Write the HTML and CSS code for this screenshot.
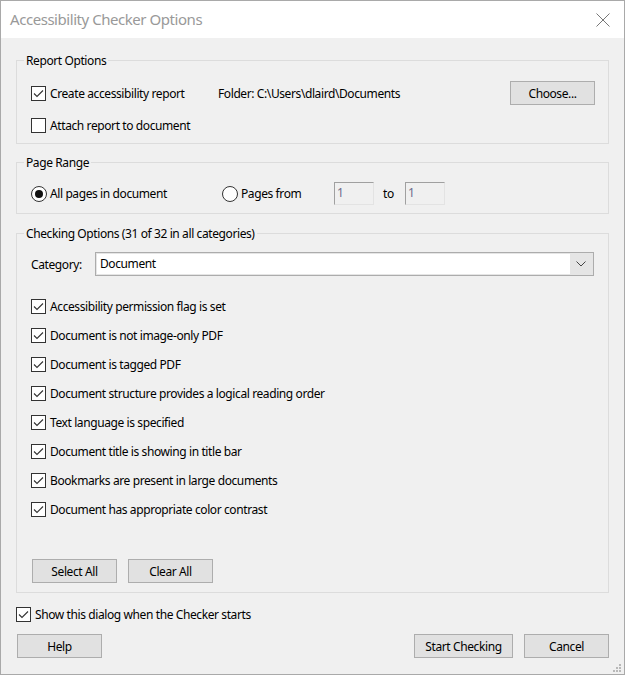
FILE: index.html
```html
<!DOCTYPE html>
<html>
<head>
<meta charset="utf-8">
<link rel="stylesheet" href="styles.css">
</head>
<body>
<div class="window">
  <div class="titlebar">
    <span class="title">Accessibility Checker Options</span>
    <svg class="close" width="14" height="14" viewBox="0 0 14 14"><path d="M0.5 0.5 L13.5 13.5 M13.5 0.5 L0.5 13.5" stroke="#777" stroke-width="1" fill="none"/></svg>
  </div>
  <div class="content">
    <div class="group g-report">
      <span class="legend">Report Options</span>
      <div class="row r1">
        <label class="chk c-create"><span class="box checked"><svg width="13" height="13" viewBox="0 0 13 13"><path d="M2 6.5 L5 9.5 L11 3.5" stroke="#333" stroke-width="1.1" fill="none"/></svg></span><span>Create accessibility report</span></label>
        <span class="folder">Folder: C:\Users\dlaird\Documents</span>
        <span class="btn choose">Choose...</span>
      </div>
      <div class="row r2">
        <label class="chk"><span class="box"></span><span>Attach report to document</span></label>
      </div>
    </div>

    <div class="group g-range">
      <span class="legend">Page Range</span>
      <div class="row rr">
        <label class="radio r-all"><span class="circle on"><span class="dot"></span></span><span>All pages in document</span></label>
        <label class="radio r-from"><span class="circle"></span><span>Pages from</span></label>
        <span class="field">1</span>
        <span class="to">to</span>
        <span class="field">1</span>
      </div>
    </div>

    <div class="group g-check">
      <span class="legend">Checking Options (31 of 32 in all categories)</span>
      <div class="row cat">
        <span class="catlabel">Category:</span>
        <div class="combo">
          <span class="combo-text">Document</span>
          <span class="combo-btn"><svg width="10" height="6" viewBox="0 0 10 6"><path d="M0.5 0.5 L5 5 L9.5 0.5" stroke="#444" stroke-width="1" fill="none"/></svg></span>
        </div>
      </div>
      <div class="list">
        <label class="chk item"><span class="box checked"><svg width="13" height="13" viewBox="0 0 13 13"><path d="M2 6.5 L5 9.5 L11 3.5" stroke="#333" stroke-width="1.1" fill="none"/></svg></span><span>Accessibility permission flag is set</span></label>
        <label class="chk item"><span class="box checked"><svg width="13" height="13" viewBox="0 0 13 13"><path d="M2 6.5 L5 9.5 L11 3.5" stroke="#333" stroke-width="1.1" fill="none"/></svg></span><span>Document is not image-only PDF</span></label>
        <label class="chk item"><span class="box checked"><svg width="13" height="13" viewBox="0 0 13 13"><path d="M2 6.5 L5 9.5 L11 3.5" stroke="#333" stroke-width="1.1" fill="none"/></svg></span><span>Document is tagged PDF</span></label>
        <label class="chk item"><span class="box checked"><svg width="13" height="13" viewBox="0 0 13 13"><path d="M2 6.5 L5 9.5 L11 3.5" stroke="#333" stroke-width="1.1" fill="none"/></svg></span><span>Document structure provides a logical reading order</span></label>
        <label class="chk item"><span class="box checked"><svg width="13" height="13" viewBox="0 0 13 13"><path d="M2 6.5 L5 9.5 L11 3.5" stroke="#333" stroke-width="1.1" fill="none"/></svg></span><span>Text language is specified</span></label>
        <label class="chk item"><span class="box checked"><svg width="13" height="13" viewBox="0 0 13 13"><path d="M2 6.5 L5 9.5 L11 3.5" stroke="#333" stroke-width="1.1" fill="none"/></svg></span><span>Document title is showing in title bar</span></label>
        <label class="chk item"><span class="box checked"><svg width="13" height="13" viewBox="0 0 13 13"><path d="M2 6.5 L5 9.5 L11 3.5" stroke="#333" stroke-width="1.1" fill="none"/></svg></span><span>Bookmarks are present in large documents</span></label>
        <label class="chk item"><span class="box checked"><svg width="13" height="13" viewBox="0 0 13 13"><path d="M2 6.5 L5 9.5 L11 3.5" stroke="#333" stroke-width="1.1" fill="none"/></svg></span><span>Document has appropriate color contrast</span></label>
      </div>
      <div class="row sel">
        <span class="btn">Select All</span>
        <span class="btn">Clear All</span>
      </div>
    </div>

    <div class="row show">
      <label class="chk"><span class="box checked"><svg width="13" height="13" viewBox="0 0 13 13"><path d="M2 6.5 L5 9.5 L11 3.5" stroke="#333" stroke-width="1.1" fill="none"/></svg></span><span>Show this dialog when the Checker starts</span></label>
    </div>
    <div class="row bottom">
      <span class="btn">Help</span>
      <span class="spacer"></span>
      <span class="btn start">Start Checking</span>
      <span class="btn">Cancel</span>
    </div>
    <svg class="grip" width="9" height="9" viewBox="0 0 9 9">
      <rect x="6" y="0" width="2" height="2" fill="#b8b8b8"/>
      <rect x="3" y="3" width="2" height="2" fill="#b8b8b8"/>
      <rect x="6" y="3" width="2" height="2" fill="#b8b8b8"/>
      <rect x="0" y="6" width="2" height="2" fill="#b8b8b8"/>
      <rect x="3" y="6" width="2" height="2" fill="#b8b8b8"/>
      <rect x="6" y="6" width="2" height="2" fill="#b8b8b8"/>
    </svg>
  </div>
</div>
</body>
</html>
```

FILE: styles.css
```css
* { box-sizing: border-box; }
html, body { margin: 0; padding: 0; }
body {
  width: 625px;
  height: 675px;
  font-family: "Noto Sans", "Open Sans", "Liberation Sans", sans-serif;
  font-size: 12px;
  letter-spacing: -0.4px;
  color: #000;
  overflow: hidden;
}
.window {
  width: 625px;
  height: 675px;
  border: 1px solid #a9a9a9;
  display: flex;
  flex-direction: column;
  background: #f0f0f0;
}
.titlebar {
  height: 37px;
  background: #fff;
  display: flex;
  align-items: center;
  padding-left: 9px;
  padding-right: 14px;
  flex: none;
}
.title {
  font-size: 15px;
  letter-spacing: -0.45px;
  color: #999;
  flex: 1;
  position: relative;
  top: -1px;
}
.close { flex: none; }
.content {
  flex: 1;
  position: relative;
  display: flex;
  flex-direction: column;
  padding-top: 22px;
}
.group {
  position: relative;
  border: 1px solid #dcdcdc;
  margin: 0 15px;
  padding-left: 14px;
  padding-right: 13px;
}
.legend {
  position: absolute;
  top: -8px;
  left: 7px;
  padding: 0 2px;
  background: #f0f0f0;
  line-height: 16px;
}
.row { display: flex; align-items: center; }
.g-report { height: 84px; padding-top: 20px; }
.r1 { height: 24px; }
.r2 { height: 24px; margin-top: 8px; }
.chk, .radio { display: flex; align-items: center; white-space: nowrap; }
.c-create { width: 187px; flex: none; }
.box {
  width: 15px;
  height: 15px;
  border: 1px solid #333;
  background: #fff;
  margin-right: 4px;
  display: flex;
  align-items: center;
  justify-content: center;
  flex: none;
}
.box svg { display: block; }
.folder { flex: 1; }
.btn {
  display: inline-flex;
  align-items: center;
  justify-content: center;
  width: 85px;
  height: 24px;
  background: #e1e1e1;
  border: 1px solid #adadad;
  white-space: nowrap;
  flex: none;
}

.g-range { height: 52px; margin-top: 18px; padding-top: 19px; }
.rr { height: 23px; }
.circle {
  width: 16px;
  height: 16px;
  border: 1px solid #333;
  border-radius: 50%;
  background: #fff;
  margin-right: 3px;
  display: flex;
  align-items: center;
  justify-content: center;
  flex: none;
}
.dot { width: 8px; height: 8px; border-radius: 50%; background: #111; }
.r-all { width: 191px; flex: none; }
.r-from { width: 112px; flex: none; }
.field {
  width: 40px;
  height: 23px;
  border-top: 1px solid #a0a0a0;
  border-left: 1px solid #a0a0a0;
  border-right: 1px solid #e3e3e3;
  border-bottom: 1px solid #e3e3e3;
  background: #f0f0f0;
  color: #6d6d8d;
  padding-left: 2px;
  line-height: 20px;
  flex: none;
}
.to { margin-left: 9px; width: 22px; flex: none; }

.g-check { height: 360px; margin-top: 19px; padding-top: 18px; padding-bottom: 9px; display: flex; flex-direction: column; }
.cat { height: 24px; }
.catlabel { width: 64px; flex: none; }
.combo {
  width: 499px;
  height: 24px;
  border: 1px solid #acacac;
  background: #e5e5e5;
  padding: 1px;
  display: flex;
  flex: none;
}
.combo-text {
  flex: 1;
  background: #fff;
  padding-left: 3px;
  line-height: 20px;
}
.combo-btn {
  width: 22px;
  display: flex;
  align-items: center;
  justify-content: center;
}
.list { margin-top: 16px; display: flex; flex-direction: column; }
.item { height: 29px; }
.sel { margin-top: 35px; height: 24px; gap: 11px; padding-left: 1px; }

.show { height: 24px; margin-top: 9px; padding-left: 15px; }
.bottom { height: 24px; margin-top: 8px; padding-left: 16px; padding-right: 15px; }
.spacer { flex: 1; }
.start { width: 99px; margin-right: 11px; }
.grip { position: absolute; right: 2px; bottom: 1px; }
```
